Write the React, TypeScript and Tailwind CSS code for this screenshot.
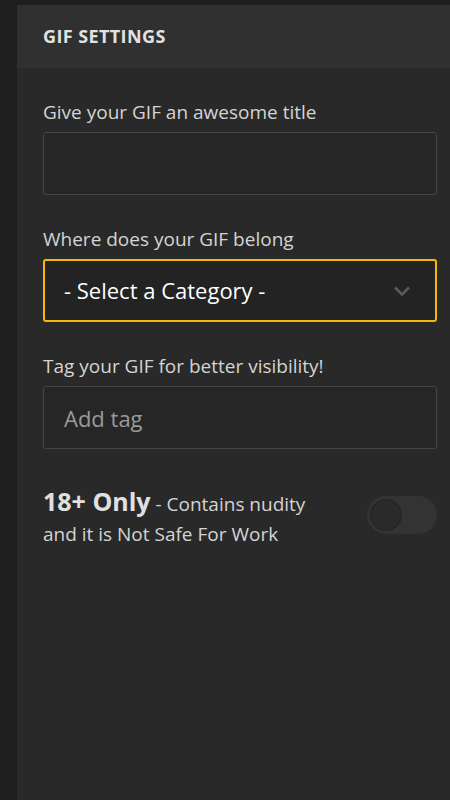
import { useState } from 'react';

const Field = ({ label, children }: { label: string; children: React.ReactNode }) => (
  <div className="flex flex-col">
    <label className="text-[19px] leading-[26px] text-[#d4d4d4] mb-[7px]">{label}</label>
    {children}
  </div>
);

const App = () => {
  const [nsfw, setNsfw] = useState(false);

  return (
    <div className="w-[450px] h-[800px] bg-[#1e1e1e] pt-[5px] pl-[17px] font-['Open_Sans',sans-serif]">
      <div className="h-full bg-[#292929] flex flex-col">
        <div className="h-[63px] shrink-0 bg-[#303030] flex items-center pl-[26px]">
          <h4 className="text-[18px] font-bold tracking-[0.4px] text-[#e2e2e2] uppercase">GIF Settings</h4>
        </div>
        <div className="flex flex-col pl-[26px] pr-[13px] pt-[31px] gap-[31px]">
          <Field label="Give your GIF an awesome title">
            <input
              type="text"
              className="h-[63px] w-full rounded-[3px] border border-[#454545] bg-[#262626] px-[20px] text-[22px] text-white focus:outline-none"
            />
          </Field>
          <Field label="Where does your GIF belong">
            <div className="h-[63px] w-full rounded-[3px] border-2 border-[#f5b70e] bg-[#232323] flex items-center pl-[19px] pr-[24px]">
              <span className="flex-1 text-[22px] text-white">- Select a Category -</span>
              <svg width="18" height="12" viewBox="0 0 18 12" fill="none">
                <path d="M2 2.5l7 7 7-7" stroke="#5c5c5c" strokeWidth="2.5" />
              </svg>
            </div>
          </Field>
          <Field label="Tag your GIF for better visibility!">
            <input
              type="text"
              placeholder="Add tag"
              className="h-[63px] w-full rounded-[3px] border border-[#454545] bg-[#262626] px-[20px] text-[22px] text-white placeholder-[#9a9a9a] focus:outline-none"
            />
          </Field>
          <div className="flex items-start justify-between mt-[9px]">
            <p className="text-[19px] leading-[30px] text-[#d4d4d4]">
              <span className="text-[25px] leading-none font-bold text-[#e0e0e0]">18+ Only</span> - Contains nudity
              <br />
              and it is Not Safe For Work
            </p>
            <button
              onClick={() => setNsfw(!nsfw)}
              className="mt-[7px] w-[70px] h-[38px] rounded-full bg-[#333333] p-[3px] flex items-center"
            >
              <span className="w-[32px] h-[32px] rounded-full bg-[#2a2a2a] border border-[#222]" />
            </button>
          </div>
        </div>
      </div>
    </div>
  );
};

export default App;
